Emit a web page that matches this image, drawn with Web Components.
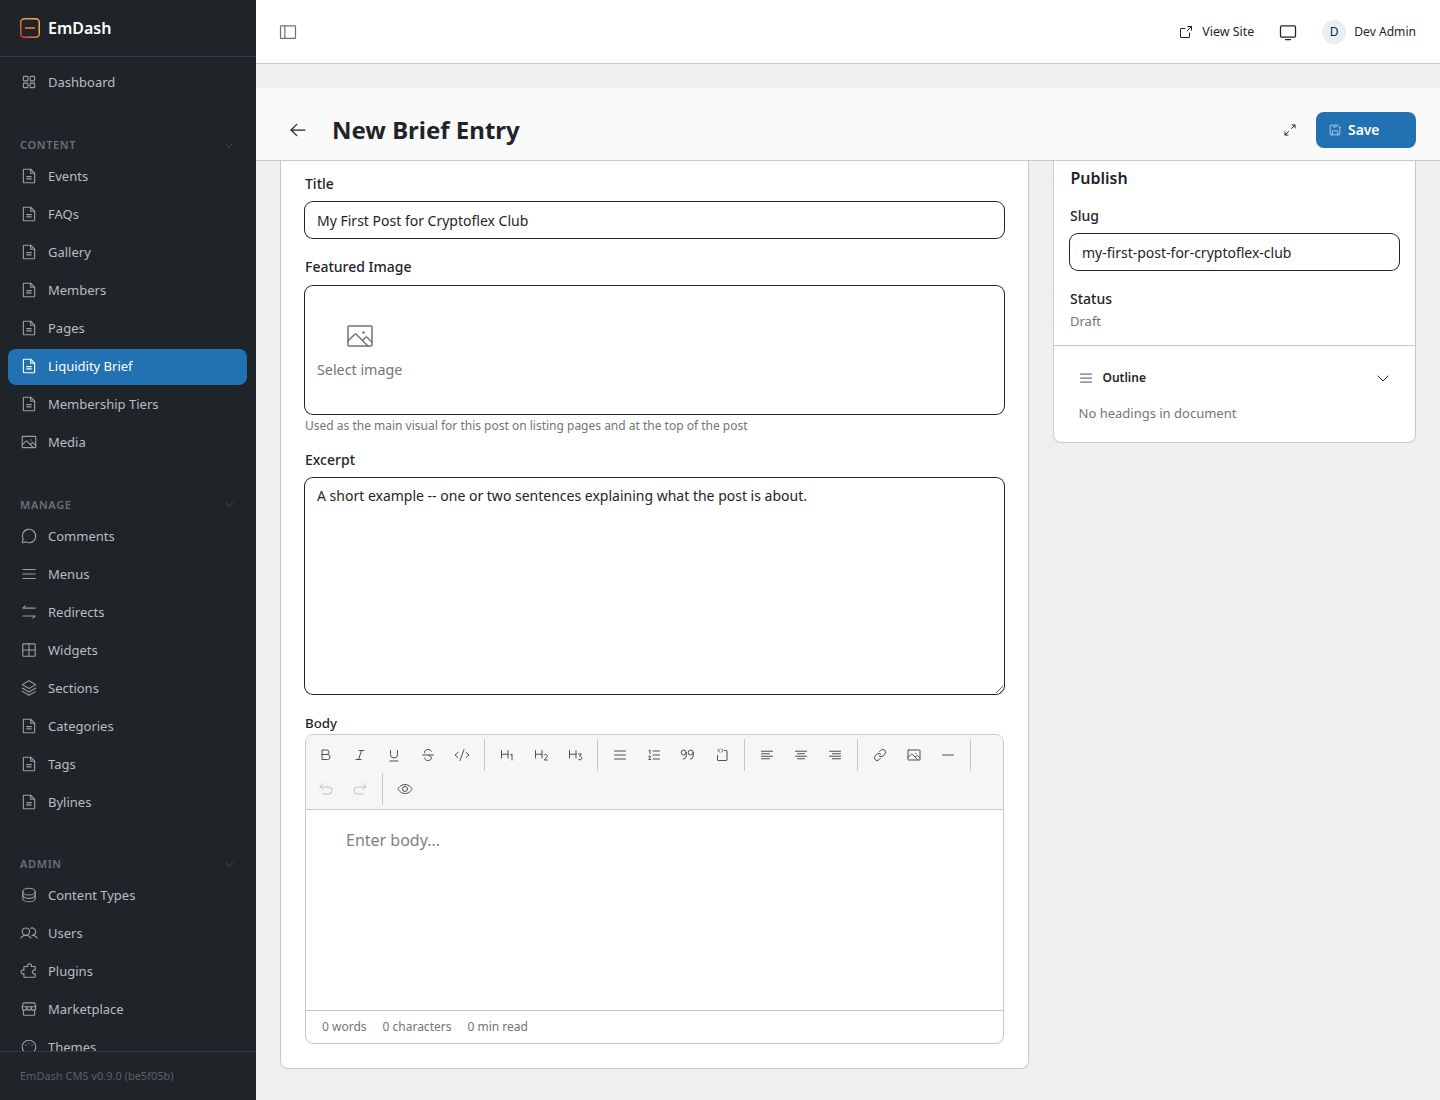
<!DOCTYPE html>
<html lang="en">
<head>
<meta charset="utf-8">
<title>EmDash</title>
<style>
html, body { margin: 0; height: 100%; overflow: hidden; background: #efefef; }
body { font-family: "Noto Sans", "Liberation Sans", sans-serif; color: #1f2429; }
</style>
</head>
<body>
<em-app>
	<em-sidebar slot="sidebar">
		<em-nav-item icon="grid" style="margin-bottom:.5px">Dashboard</em-nav-item>
		<em-nav-group label="Content">
			<em-nav-item icon="file">Events</em-nav-item>
			<em-nav-item icon="file">FAQs</em-nav-item>
			<em-nav-item icon="file">Gallery</em-nav-item>
			<em-nav-item icon="file">Members</em-nav-item>
			<em-nav-item icon="file">Pages</em-nav-item>
			<em-nav-item icon="file" active>Liquidity Brief</em-nav-item>
			<em-nav-item icon="file">Membership Tiers</em-nav-item>
			<em-nav-item icon="image">Media</em-nav-item>
		</em-nav-group>
		<em-nav-group label="Manage">
			<em-nav-item icon="chat">Comments</em-nav-item>
			<em-nav-item icon="list">Menus</em-nav-item>
			<em-nav-item icon="redirect">Redirects</em-nav-item>
			<em-nav-item icon="widgets">Widgets</em-nav-item>
			<em-nav-item icon="stack">Sections</em-nav-item>
			<em-nav-item icon="file">Categories</em-nav-item>
			<em-nav-item icon="file">Tags</em-nav-item>
			<em-nav-item icon="file">Bylines</em-nav-item>
		</em-nav-group>
		<em-nav-group label="Admin">
			<em-nav-item icon="database">Content Types</em-nav-item>
			<em-nav-item icon="users">Users</em-nav-item>
			<em-nav-item icon="puzzle">Plugins</em-nav-item>
			<em-nav-item icon="store">Marketplace</em-nav-item>
			<em-nav-item icon="palette">Themes</em-nav-item>
		</em-nav-group>
	</em-sidebar>
	<em-topbar slot="topbar"></em-topbar>
	<em-page-header slot="header">New Brief Entry</em-page-header>
	<em-card slot="main" class="editor-card">
		<em-field label="Title"><em-input>My First Post for Cryptoflex Club</em-input></em-field>
		<em-field label="Featured Image" hint="Used as the main visual for this post on listing pages and at the top of the post"><em-image-picker></em-image-picker></em-field>
		<em-field label="Excerpt"><em-textarea>A short example -- one or two sentences explaining what the post is about.</em-textarea></em-field>
		<em-field label="Body" style="--label-size:13.3px"><em-editor></em-editor></em-field>
	</em-card>
	<em-publish-panel slot="aside"></em-publish-panel>
</em-app>

<script>
const ICONS = {
	grid: '<rect x="48" y="48" width="64" height="64" rx="8"/><rect x="144" y="48" width="64" height="64" rx="8"/><rect x="48" y="144" width="64" height="64" rx="8"/><rect x="144" y="144" width="64" height="64" rx="8"/>',
	file: '<path d="M200 224H56a8 8 0 0 1-8-8V40a8 8 0 0 1 8-8h96l56 56v128a8 8 0 0 1-8 8Z"/><path d="M152 32v56h56"/><path d="M96 136h64"/><path d="M96 168h64"/>',
	image: '<rect x="32" y="48" width="192" height="160" rx="8"/><circle cx="156" cy="100" r="10" fill="currentColor" stroke="none"/><path d="M147.3 164 173 138.3a8 8 0 0 1 11.3 0L224 178"/><path d="M32 168.7l54.3-54.4a8 8 0 0 1 11.4 0L191.3 208"/>',
	chat: '<path d="M79.9 211.1a96 96 0 1 0-35-35L32.4 213.5a8 8 0 0 0 10.1 10.1l37.4-12.5Z"/>',
	list: '<path d="M40 128h176"/><path d="M40 64h176"/><path d="M40 192h176"/>',
	redirect: '<path d="M216 72H40l32-32"/><path d="M40 184h176l-32 32"/>',
	widgets: '<rect x="40" y="40" width="176" height="176" rx="8"/><path d="M128 40v176"/><path d="M40 128h176"/>',
	stack: '<path d="M32 80l96 56 96-56-96-56Z"/><path d="M32 128l96 56 96-56"/><path d="M32 176l96 56 96-56"/>',
	database: '<ellipse cx="128" cy="80" rx="88" ry="48"/><path d="M40 80v48c0 26.5 39.4 48 88 48s88-21.5 88-48V80"/><path d="M40 128v48c0 26.5 39.4 48 88 48s88-21.5 88-48v-48"/>',
	users: '<circle cx="84" cy="108" r="52"/><path d="M10.2 200c16-24 43-40 73.8-40s57.8 16 73.8 40"/><path d="M152.3 59.8a52 52 0 1 1 19.7 100.2c30.8 0 57.8 16 73.8 40"/>',
	puzzle: '<path d="M64 216a8 8 0 0 1-8-8v-42.7a28 28 0 1 1 0-50.6V72a8 8 0 0 1 8-8h46.7a28 28 0 1 1 50.6 0H208a8 8 0 0 1 8 8v42.7a28 28 0 1 0 0 50.6V208a8 8 0 0 1-8 8Z"/>',
	store: '<path d="M48 139.6V208a8 8 0 0 0 8 8h144a8 8 0 0 0 8-8v-68.4"/><path d="M54 40h148a8 8 0 0 1 7.7 5.8L224 96H32l14.3-50.2A8 8 0 0 1 54 40Z"/><path d="M96 96v16a32 32 0 0 1-64 0V96"/><path d="M160 96v16a32 32 0 0 1-64 0V96"/><path d="M224 96v16a32 32 0 0 1-64 0V96"/>',
	palette: '<circle cx="128" cy="128" r="96"/><circle cx="128" cy="76" r="10" fill="currentColor" stroke="none"/><circle cx="84" cy="104" r="10" fill="currentColor" stroke="none"/><circle cx="172" cy="104" r="10" fill="currentColor" stroke="none"/>',
	caret: '<path d="M208 96l-80 80-80-80"/>',
	sidebar: '<rect x="32" y="48" width="192" height="160" rx="8"/><path d="M88 48v160"/>',
	external: '<path d="M216 100V40h-60"/><path d="M144 112l72-72"/><path d="M184 144v64a8 8 0 0 1-8 8H48a8 8 0 0 1-8-8V80a8 8 0 0 1 8-8h64"/>',
	monitor: '<rect x="32" y="48" width="192" height="144" rx="16"/><path d="M160 224H96"/>',
	back: '<path d="M216 128H40"/><path d="M112 56l-72 72 72 72"/>',
	expand: '<path d="M160 48h48v48"/><path d="M208 48l-56 56"/><path d="M96 208H48v-48"/><path d="M48 208l56-56"/>',
	save: '<path d="M216 83.3V208a8 8 0 0 1-8 8H48a8 8 0 0 1-8-8V48a8 8 0 0 1 8-8h124.7a8 8 0 0 1 5.6 2.3l35.4 35.4a8 8 0 0 1 2.3 5.6Z"/><path d="M80 216v-64a8 8 0 0 1 8-8h80a8 8 0 0 1 8 8v64"/><path d="M152 72H96"/>',
	bold: '<path d="M64 120h88a40 40 0 0 1 0 80H64V48h76a36 36 0 0 1 0 72"/>',
	italic: '<path d="M152 56l-48 144"/><path d="M64 200h80"/><path d="M112 56h80"/>',
	underline: '<path d="M64 224h128"/><path d="M72 56v64a56 56 0 0 0 112 0V56"/>',
	strike: '<path d="M40 128h176"/><path d="M76 96a30 30 0 0 1-3-16c0-22 22-40 55-40 26 0 46 11 55 28"/><path d="M74 176c0 22 24 40 54 40s54-18 54-40c0-23-21-32-44-40"/>',
	code: '<path d="M64 88l-48 40 48 40"/><path d="M192 88l48 40-48 40"/><path d="M160 40L96 216"/>',
	h1: '<path d="M40 56v120"/><path d="M144 56v120"/><path d="M40 116h104"/><path d="M208 208v-96l-24 16"/>',
	h2: '<path d="M40 56v120"/><path d="M144 56v120"/><path d="M40 116h104"/><path d="M180 132a26 26 0 1 1 46 24l-46 52h48"/>',
	h3: '<path d="M40 56v120"/><path d="M144 56v120"/><path d="M40 116h104"/><path d="M184 112h44l-24 36a30 30 0 1 1-22 48"/>',
	numbers: '<path d="M112 64h104"/><path d="M112 128h104"/><path d="M112 192h104"/><path d="M48 56l16-8v56"/><path d="M44 156a14 14 0 1 1 26 8l-26 36h28"/>',
	quotes: '<circle cx="60" cy="88" r="40"/><path d="M100 88v56a56 56 0 0 1-48 52"/><circle cx="172" cy="88" r="40"/><path d="M212 88v56a56 56 0 0 1-48 52"/>',
	codeblock: '<path d="M168 56h32a8 8 0 0 1 8 8v144a8 8 0 0 1-8 8H64a8 8 0 0 1-8-8v-72"/><path d="M88 32L64 56l24 24"/><path d="M120 32l24 24-24 24"/>',
	left: '<path d="M40 68h176"/><path d="M40 108h128"/><path d="M40 148h176"/><path d="M40 188h128"/>',
	center: '<path d="M40 68h176"/><path d="M72 108h112"/><path d="M40 148h176"/><path d="M72 188h112"/>',
	right: '<path d="M40 68h176"/><path d="M88 108h128"/><path d="M40 148h176"/><path d="M88 188h128"/>',
	link: '<path d="M122.3 71.7l19.8-19.8a44.1 44.1 0 0 1 62.4 0h0a44.1 44.1 0 0 1 0 62.4l-28.3 28.3a44 44 0 0 1-62.2 0"/><path d="M133.7 184.3l-19.8 19.8a44.1 44.1 0 0 1-62.4 0h0a44.1 44.1 0 0 1 0-62.4l28.3-28.3a44 44 0 0 1 62.2 0"/>',
	minus: '<path d="M40 128h176"/>',
	undo: '<path d="M80 136L32 88l48-48"/><path d="M80 208h88a56 56 0 0 0 0-112H32"/>',
	redo: '<path d="M176 136l48-48-48-48"/><path d="M176 208H88a56 56 0 0 1 0-112h136"/>',
	eye: '<path d="M128 56C48 56 16 128 16 128s32 72 112 72 112-72 112-72-32-72-112-72Z"/><circle cx="128" cy="128" r="40"/>'
};

class BaseElement extends HTMLElement {
	connectedCallback() {
		if (this.shadowRoot) return;
		const template = document.createElement('template');
		template.innerHTML = `<style>${this.styles}</style>${this.markup}`;
		this.attachShadow({ mode: 'open' });
		this.shadowRoot.appendChild(template.content.cloneNode(true));
	}
}

class EmIcon extends BaseElement {
	get styles() {
		return `
		:host{ display:inline-flex; flex:none; }
		svg{ display:block; fill:none; stroke:currentColor; stroke-linecap:round; stroke-linejoin:round; }
		`;
	}
	get markup() {
		const size = this.getAttribute('size') || 16;
		const weight = this.getAttribute('weight') || 16;
		return `<svg xmlns="http://www.w3.org/2000/svg" width="${size}" height="${size}" viewBox="0 0 256 256" stroke-width="${weight}">${ICONS[this.getAttribute('name')] || ''}</svg>`;
	}
}

class EmApp extends BaseElement {
	get styles() {
		return `
		:host{ display:grid; grid-template-columns:256px 1fr; height:100vh; overflow:hidden; }
		.main{ display:flex; flex-direction:column; min-width:0; height:100vh; overflow:hidden; }
		.columns{ display:grid; grid-template-columns:749px 363px; gap:24px; padding:0 24px; align-items:start; }
		`;
	}
	get markup() {
		// the editor page is scrolled: the sticky header cuts off the tops of both cards
		return `
		<slot name="sidebar"></slot>
		<div class="main">
			<slot name="topbar"></slot>
			<slot name="header"></slot>
			<div class="columns">
				<slot name="main"></slot>
				<slot name="aside"></slot>
			</div>
		</div>
		`;
	}
}

class EmSidebar extends BaseElement {
	get styles() {
		return `
		:host{ display:flex; flex-direction:column; height:100vh; background:#1f2429; color:#b9bdc1; }
		.brand{ display:flex; align-items:center; gap:8px; height:56px; padding:0 20px; border-bottom:1px solid #343a40; flex:none; }
		.brand svg{ display:block; flex:none; }
		.brand span{ font-size:16px; font-weight:600; color:#fff; }
		nav{ flex:1; min-height:0; overflow:hidden; padding:7.5px 9px 0 8px; display:flex; flex-direction:column; }
		footer{ flex:none; height:48px; box-sizing:content-box; border-top:1px solid #343a40; display:flex; align-items:center; padding:0 20px; font-size:11px; color:#5a6167; }
		footer span{ margin-bottom:2px; }
		`;
	}
	get markup() {
		return `
		<div class="brand">
			<svg width="20" height="20" viewBox="0 0 20 20" fill="none">
				<defs><linearGradient id="logo" x1="0" y1="1" x2="1" y2="0"><stop offset="0" stop-color="#e0245e"/><stop offset=".3" stop-color="#f0622f"/><stop offset=".6" stop-color="#f59a3a"/><stop offset="1" stop-color="#f8b04a"/></linearGradient></defs>
				<rect x=".75" y=".75" width="18.5" height="18.5" rx="3.5" stroke="url(#logo)" stroke-width="1.5"/>
				<path d="M5 10h10" stroke="#f27a2a" stroke-width="1.6"/>
			</svg>
			<span>EmDash</span>
		</div>
		<nav><slot></slot></nav>
		<footer><span>EmDash CMS v0.9.0 (be5f05b)</span></footer>
		`;
	}
}

class EmNavGroup extends BaseElement {
	get styles() {
		return `
		:host{ display:block; margin-top:31.5px; flex:none; }
		.head{ display:flex; align-items:center; justify-content:space-between; box-sizing:border-box; height:26px; padding:0 12px 2px; color:#697076; font-size:11px; font-weight:600; letter-spacing:.06em; text-transform:uppercase; }
		em-icon{ color:#50575d; }
		.items{ display:flex; flex-direction:column; gap:2px; }
		`;
	}
	get markup() {
		return `
		<div class="head"><span>${this.getAttribute('label')}</span><em-icon name="caret" size="12"></em-icon></div>
		<div class="items"><slot></slot></div>
		`;
	}
}

class EmNavItem extends BaseElement {
	get styles() {
		return `
		:host{ display:flex; align-items:center; gap:10px; box-sizing:border-box; height:36px; padding:0 12px 1px; border-radius:8px; font-size:13px; flex:none; }
		:host([active]){ background:#2271b3; color:#fff; }
		em-icon{ color:#9a9ea2; }
		:host([active]) em-icon{ color:#fff; }
		`;
	}
	get markup() {
		return `<em-icon name="${this.getAttribute('icon')}" size="18"></em-icon><slot></slot>`;
	}
}

class EmTopbar extends BaseElement {
	get styles() {
		return `
		:host{ display:flex; align-items:center; height:63px; flex:none; padding:0 24px 0 22px; background:#fff; border-bottom:1px solid #c8c8c8; font-size:12.1px; }
		.toggle{ color:#6f7479; margin-right:auto; }
		.view{ display:flex; align-items:center; gap:8px; margin-right:24px; font-size:12.45px; }
		.screen{ margin-right:24px; }
		.avatar{ width:24px; height:24px; border-radius:50%; background:#e6eff7; display:flex; align-items:center; justify-content:center; margin-right:8px; }
		`;
	}
	get markup() {
		return `
		<em-icon class="toggle" name="sidebar" size="20"></em-icon>
		<span class="view"><em-icon name="external" size="16"></em-icon>View Site</span>
		<em-icon class="screen" name="monitor" size="20"></em-icon>
		<span class="avatar">D</span>
		<span>Dev Admin</span>
		`;
	}
}

class EmPageHeader extends BaseElement {
	get styles() {
		return `
		:host{ display:flex; align-items:center; box-sizing:border-box; height:73px; flex:none; margin-top:24px; padding:12px 24px 0 32px; background:#fafafa; border-bottom:1px solid #c8c8c8; }
		h1{ margin:0 auto 0 24px; font-size:24px; line-height:32px; font-weight:700; color:#1f2429; }
		.expand{ margin-right:18px; }
		.save{ display:flex; align-items:center; gap:6px; width:100px; height:36px; box-sizing:border-box; padding:0 0 2px 12px; border-radius:8px; background:#2271b3; color:#fff; font-size:13.9px; font-weight:600; }
		.save em-icon{ color:#bcd6ea; margin-top:2px; }
		`;
	}
	get markup() {
		return `
		<em-icon name="back" size="20"></em-icon>
		<h1><slot></slot></h1>
		<em-icon class="expand" name="expand" size="16"></em-icon>
		<div class="save"><em-icon name="save" size="14"></em-icon>Save</div>
		`;
	}
}

class EmCard extends BaseElement {
	get styles() {
		return `
		:host{ display:block; box-sizing:border-box; background:#fff; border:1px solid #c8c8c8; border-top:0; border-radius:0 0 8px 8px; padding:13px 24px 24px; }
		`;
	}
	get markup() {
		return `<slot></slot>`;
	}
}

class EmField extends BaseElement {
	get styles() {
		return `
		:host{ display:block; margin-bottom:18.5px; }
		:host([hint]){ margin-bottom:16.5px; }
		:host(:last-child){ margin-bottom:0; }
		label{ display:block; font-size:var(--label-size, 14px); line-height:20px; font-weight:500; margin-bottom:8px; }
		.hint{ font-size:12px; line-height:16px; color:#70767b; margin-top:4px; }
		`;
	}
	get markup() {
		const hint = this.getAttribute('hint');
		return `
		<label>${this.getAttribute('label')}</label>
		<slot></slot>
		${hint ? `<div class="hint">${hint}</div>` : ''}
		`;
	}
}

class EmInput extends BaseElement {
	get styles() {
		return `
		:host{ display:flex; align-items:center; height:36px; padding:0 12px; border-radius:8px; box-shadow:0 0 0 1px #1f2429; background:#fff; font-size:14px; color:#1f2429; }
		`;
	}
	get markup() {
		return `<slot></slot>`;
	}
}

class EmTextarea extends BaseElement {
	get styles() {
		return `
		:host{ display:block; box-sizing:border-box; height:216px; padding:8px 12px; border-radius:8px; box-shadow:0 0 0 1px #1f2429; background:#fff; font-size:14px; line-height:20px; overflow:auto; resize:vertical; }
		`;
	}
	get markup() {
		return `<slot></slot>`;
	}
}

class EmImagePicker extends BaseElement {
	get styles() {
		return `
		:host{ display:flex; align-items:center; height:128px; margin-top:9px; padding:0 12px; border-radius:8px; box-shadow:0 0 0 1px #1f2429; background:#fff; }
		.pick{ display:flex; flex-direction:column; align-items:center; gap:8px; font-size:14.3px; line-height:20px; color:#70767b; }
		`;
	}
	get markup() {
		return `<div class="pick"><em-icon name="image" size="32" weight="12"></em-icon><span>Select image</span></div>`;
	}
}

class EmToolButton extends BaseElement {
	get styles() {
		return `
		:host{ display:flex; align-items:center; justify-content:center; width:32px; height:32px; color:#4b5055; }
		:host([disabled]){ color:#bdbfc1; }
		`;
	}
	get markup() {
		return `<em-icon name="${this.getAttribute('icon')}" size="16"></em-icon>`;
	}
}

class EmEditor extends BaseElement {
	get styles() {
		return `
		:host{ display:block; border:1px solid #c8c8c8; border-radius:8px; overflow:hidden; background:#fff; margin-top:-7px; }
		.toolbar{ display:flex; flex-wrap:wrap; gap:2px; padding:4px; background:#f6f6f6; border-bottom:1px solid #c8c8c8; }
		.sep{ width:1px; height:32px; margin:0 4px; background:#c8c8c8; }
		.body{ height:200px; box-sizing:border-box; padding:19px 40px; font-size:16px; line-height:22px; color:#7c8287; }
		.foot{ display:flex; gap:16px; align-items:center; height:32px; padding:0 16px; border-top:1px solid #c8c8c8; font-size:12px; color:#70767b; }
		`;
	}
	get markup() {
		const groups = [
			['bold', 'italic', 'underline', 'strike', 'code'],
			['h1', 'h2', 'h3'],
			['list', 'numbers', 'quotes', 'codeblock'],
			['left', 'center', 'right'],
			['link', 'image', 'minus']
		];
		const tools = groups.map(group =>
			group.map(icon => `<em-tool-button icon="${icon}"></em-tool-button>`).join('') + '<span class="sep"></span>'
		).join('');
		return `
		<div class="toolbar">
			${tools}
			<em-tool-button icon="undo" disabled></em-tool-button>
			<em-tool-button icon="redo" disabled></em-tool-button>
			<span class="sep"></span>
			<em-tool-button icon="eye"></em-tool-button>
		</div>
		<div class="body">Enter body...</div>
		<div class="foot"><span>0 words</span><span>0 characters</span><span>0 min read</span></div>
		`;
	}
}

class EmPublishPanel extends BaseElement {
	get styles() {
		return `
		:host{ display:block; box-sizing:border-box; background:#fff; border:1px solid #c8c8c8; border-top:0; border-radius:0 0 8px 8px; }
		.publish{ padding:5px 16px 15px; }
		h2{ margin:0 0 16px .5px; font-size:16px; line-height:24px; font-weight:600; }
		label{ display:block; font-size:14px; line-height:20px; font-weight:500; margin-bottom:8px; }
		.status{ font-size:14px; line-height:20px; font-weight:500; margin-top:19px; }
		.draft{ font-size:13px; line-height:18px; color:#70767b; margin-top:3px; }
		.outline{ border-top:1px solid #c8c8c8; padding:24px 24px 20px; }
		.row{ display:flex; align-items:center; gap:8.5px; height:16px; font-size:12px; font-weight:600; }
		.row em-icon:first-child{ color:#6f7479; }
		.row span{ margin:0 auto 2px 0; }
		.none{ font-size:13px; line-height:18px; color:#70767b; margin-top:18px; padding-left:.5px; }
		`;
	}
	get markup() {
		return `
		<div class="publish">
			<h2>Publish</h2>
			<label>Slug</label>
			<em-input>my-first-post-for-cryptoflex-club</em-input>
			<div class="status">Status</div>
			<div class="draft">Draft</div>
		</div>
		<div class="outline">
			<div class="row"><em-icon name="list" size="16" weight="20"></em-icon><span>Outline</span><em-icon name="caret" size="16"></em-icon></div>
			<div class="none">No headings in document</div>
		</div>
		`;
	}
}

customElements.define('em-icon', EmIcon);
customElements.define('em-app', EmApp);
customElements.define('em-sidebar', EmSidebar);
customElements.define('em-nav-group', EmNavGroup);
customElements.define('em-nav-item', EmNavItem);
customElements.define('em-topbar', EmTopbar);
customElements.define('em-page-header', EmPageHeader);
customElements.define('em-card', EmCard);
customElements.define('em-field', EmField);
customElements.define('em-input', EmInput);
customElements.define('em-textarea', EmTextarea);
customElements.define('em-image-picker', EmImagePicker);
customElements.define('em-tool-button', EmToolButton);
customElements.define('em-editor', EmEditor);
customElements.define('em-publish-panel', EmPublishPanel);
</script>
</body>
</html>
